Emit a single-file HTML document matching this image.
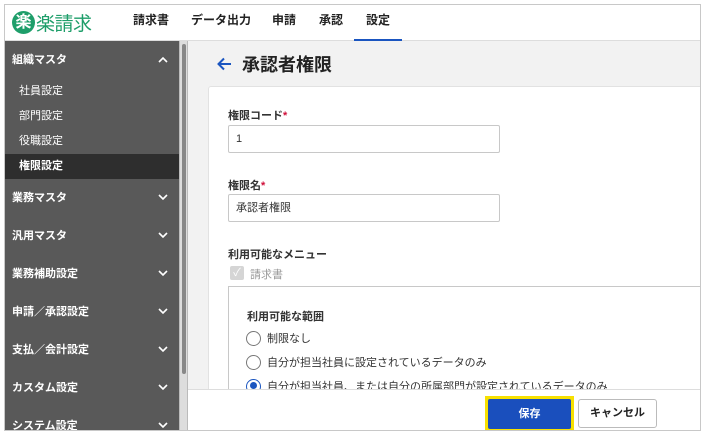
<!DOCTYPE html>
<html><head><meta charset="utf-8"><style>
*{box-sizing:border-box;margin:0;padding:0}
body{width:704px;height:434px;background:#fff;font-family:"Liberation Sans","Noto Sans CJK JP",sans-serif;position:relative;overflow:hidden;color:#333}
#frame{position:absolute;left:4px;top:4px;width:697px;height:427px;border:1px solid #c8c8c8;overflow:hidden;background:#f2f2f2}
#hdr{position:absolute;left:0;top:0;width:100%;height:36px;background:#fff;border-bottom:1px solid #ddd}
.logo{position:absolute;left:7px;top:4px;display:flex;align-items:center}
.logo .c{width:23px;height:23px;border-radius:50%;background:#1e9e6a;color:#fff;font-size:16px;font-weight:bold;text-align:center;line-height:23px}
.logo .t{color:#1e9e6a;font-size:19px;margin-left:1px;letter-spacing:-.5px}
.nav{position:absolute;top:0;font-size:12px;font-weight:bold;line-height:30px;color:#222}
.nav.on:after{content:"";position:absolute;left:-12px;right:-12px;top:34px;height:2px;background:#1a55c0}
#side{position:absolute;left:0;top:36px;width:174px;height:400px;background:#595959;color:#fff;font-size:11px;font-weight:bold}
.sec{height:38px;line-height:38px;padding-left:7px;position:relative}
.sec svg{position:absolute;right:11px;top:15px}
.sub{height:25px;line-height:25px;padding-left:14px;font-weight:normal;font-size:11px}
.sub.on{background:#2e2e2e;font-weight:bold}
#sb{position:absolute;left:174px;top:36px;width:9px;height:400px;background:#ddd;border-left:1px solid #bbb;border-right:1px solid #bbb}
#sb div{position:absolute;left:2px;top:3px;width:4px;height:330px;background:#888;border-radius:2px}
#title{position:absolute;left:212px;top:46px;font-size:18px;font-weight:bold;color:#222;display:flex;align-items:center}
#title svg{margin-right:10px}
#card{position:absolute;left:203px;top:81px;width:500px;height:320px;background:#fff;border:1px solid #e2e2e2;border-radius:3px}
.lbl{position:absolute;left:19px;font-size:11px;font-weight:bold;color:#333}
.lbl i{color:#d0103a;font-style:normal}
.inp{position:absolute;left:19px;width:272px;height:28px;border:1px solid #c8c8c8;border-radius:2px;font-size:11px;line-height:26px;padding-left:7px;color:#333}
.chk{position:absolute;left:21px;top:179px;width:14px;height:14px;background:#d5d5d5;border-radius:2px;color:#fff;font-size:11px;line-height:14px;text-align:center}
.inner{position:absolute;left:19px;top:199px;width:490px;height:140px;border:1px solid #c8c8c8}
.rad{position:absolute;left:20px;font-size:11px;color:#333;display:flex;align-items:center}
.rad span.r{width:15px;height:15px;border:1.5px solid #777;border-radius:50%;margin-right:6px;display:inline-block;position:relative}
.rad span.r.on{border-color:#1a55c0}
.rad span.r.on:after{content:"";position:absolute;left:2.5px;top:2.5px;width:7px;height:7px;border-radius:50%;background:#1a55c0}
#foot{position:absolute;left:183px;top:384px;width:520px;height:50px;background:#fff;border-top:1px solid #ddd}
#save{position:absolute;left:297px;top:6px;width:89px;height:36px;border:3px solid #f7e000;background:#f7e000}
#save div{width:100%;height:100%;background:#1a4fbd;color:#fff;font-size:11px;font-weight:bold;text-align:center;line-height:30px;border-radius:2px}
#cancel{position:absolute;left:390px;top:9px;width:79px;height:29px;border:1px solid #bbb;border-radius:3px;font-size:11px;font-weight:bold;text-align:center;line-height:27px;color:#222;background:#fff}
</style></head><body>
<div id="frame">
<div id="hdr">
<div class="logo"><div class="c">楽</div><div class="t">楽請求</div></div>
<div class="nav" style="left:128px">請求書</div>
<div class="nav" style="left:186px">データ出力</div>
<div class="nav" style="left:267px">申請</div>
<div class="nav" style="left:314px">承認</div>
<div class="nav on" style="left:361px">設定</div>
</div>
<div id="side">
<div class="sec">組織マスタ<svg width="10" height="7" viewBox="0 0 10 7"><path d="M1 6L5 2L9 6" fill="none" stroke="#fff" stroke-width="1.6"/></svg></div>
<div class="sub">社員設定</div>
<div class="sub">部門設定</div>
<div class="sub">役職設定</div>
<div class="sub on">権限設定</div>
<div class="sec">業務マスタ<svg width="10" height="7" viewBox="0 0 10 7"><path d="M1 1L5 5L9 1" fill="none" stroke="#fff" stroke-width="1.6"/></svg></div>
<div class="sec">汎用マスタ<svg width="10" height="7" viewBox="0 0 10 7"><path d="M1 1L5 5L9 1" fill="none" stroke="#fff" stroke-width="1.6"/></svg></div>
<div class="sec">業務補助設定<svg width="10" height="7" viewBox="0 0 10 7"><path d="M1 1L5 5L9 1" fill="none" stroke="#fff" stroke-width="1.6"/></svg></div>
<div class="sec">申請／承認設定<svg width="10" height="7" viewBox="0 0 10 7"><path d="M1 1L5 5L9 1" fill="none" stroke="#fff" stroke-width="1.6"/></svg></div>
<div class="sec">支払／会計設定<svg width="10" height="7" viewBox="0 0 10 7"><path d="M1 1L5 5L9 1" fill="none" stroke="#fff" stroke-width="1.6"/></svg></div>
<div class="sec">カスタム設定<svg width="10" height="7" viewBox="0 0 10 7"><path d="M1 1L5 5L9 1" fill="none" stroke="#fff" stroke-width="1.6"/></svg></div>
<div class="sec">システム設定<svg width="10" height="7" viewBox="0 0 10 7"><path d="M1 1L5 5L9 1" fill="none" stroke="#fff" stroke-width="1.6"/></svg></div>
</div>
<div id="sb"><div></div></div>
<div id="title"><svg width="15" height="14" viewBox="0 0 15 14"><path d="M14 7H2M7 1.5L1.5 7L7 12.5" fill="none" stroke="#1a55c0" stroke-width="2"/></svg>承認者権限</div>
<div id="card">
<div class="lbl" style="top:20px">権限コード<i>*</i></div>
<div class="inp" style="top:38px">1</div>
<div class="lbl" style="top:90px">権限名<i>*</i></div>
<div class="inp" style="top:107px">承認者権限</div>
<div class="lbl" style="top:159px">利用可能なメニュー</div>
<div class="chk">✓</div>
<div style="position:absolute;left:41px;top:179px;font-size:11px;color:#999">請求書</div>
<div class="inner">
<div class="lbl" style="top:21px;left:18px">利用可能な範囲</div>
<div class="rad" style="top:43px;left:17px"><span class="r"></span>制限なし</div>
<div class="rad" style="top:67px;left:17px"><span class="r"></span>自分が担当社員に設定されているデータのみ</div>
<div class="rad" style="top:91px;left:17px"><span class="r on"></span>自分が担当社員、または自分の所属部門が設定されているデータのみ</div>
</div>
</div>
<div id="foot">
<div id="save"><div>保存</div></div>
<div id="cancel">キャンセル</div>
</div>
</div>
</body></html>
